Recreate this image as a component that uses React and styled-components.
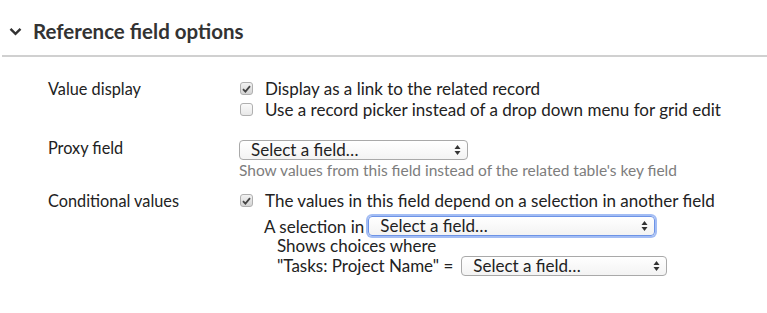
import React from "react";
import styled, { createGlobalStyle } from "styled-components";

const Global = createGlobalStyle`
  body {
    margin: 0;
    background: #fff;
    font-family: Lato, "Open Sans", sans-serif;
    color: #222;
  }
`;

const Section = styled.div`
  width: 767px;
  height: 313px;
  padding-top: 17px;
  box-sizing: border-box;
`;

const Header = styled.div`
  display: flex;
  align-items: center;
  gap: 11px;
  padding-left: 7px;
  height: 28px;
  border-bottom: 2px solid #d0d0d0;
  margin-left: 2px;
  padding-bottom: 10px;
  h2 {
    margin: 0;
    font-size: 20.5px;
    font-weight: 700;
    color: #333;
  }
`;

const Body = styled.div`
  padding: 21px 0 0 48px;
  display: flex;
  flex-direction: column;
`;

const Row = styled.div`
  display: grid;
  grid-template-columns: 191px 1fr;
  font-size: 17px;
  line-height: 21px;
  margin-top: ${(p) => p.gap || 0}px;
`;

const Label = styled.div`
  color: #222;
  font-size: 16.3px;
`;

const Options = styled.div`
  display: flex;
  flex-direction: column;
`;

const Check = styled.label`
  display: flex;
  align-items: center;
  gap: 12px;
  color: #222;
`;

const Box = styled.span`
  width: 11px;
  height: 11px;
  border: 1px solid #b0b0b0;
  border-radius: 3px;
  background: ${(p) =>
    p.checked ? "linear-gradient(#f2f2f2, #d4d4d4)" : "linear-gradient(#fafafa, #e8e8e8)"};
  display: flex;
  align-items: center;
  justify-content: center;
  flex-shrink: 0;
  margin-left: 1px;
`;

const Select = styled.div`
  display: flex;
  align-items: center;
  justify-content: space-between;
  box-sizing: border-box;
  width: ${(p) => p.w}px;
  height: 20px;
  margin-top: ${(p) => p.top || 0}px;
  padding: 0 6px 0 11px;
  border: 1px solid #a9a9a9;
  border-radius: 4px;
  background: linear-gradient(#fff, #f3f3f3);
  font-size: 17px;
  line-height: 18px;
  color: #222;
  flex-shrink: 0;
  ${(p) =>
    p.focus &&
    `
    border-color: #6d93e6;
    box-shadow: 0 0 0 2px #a3bdf4;
  `}
`;

const Hint = styled.div`
  color: #7d7d7d;
  font-size: 15.5px;
  line-height: 20px;
`;

const Inline = styled.div`
  display: flex;
  align-items: center;
  height: 20px;
  gap: ${(p) => p.gap}px;
  padding-left: ${(p) => p.indent}px;
  margin-top: ${(p) => p.top || 0}px;
  white-space: nowrap;
`;

const Stack = styled.div`
  display: flex;
  flex-direction: column;
  padding-left: 38px;
  line-height: 20px;
`;

const Arrows = () => (
  <svg width="7" height="12" viewBox="0 0 7 12">
    <path d="M3.5 1 L6.5 5 L0.5 5 Z" fill="#333" />
    <path d="M3.5 11 L6.5 7 L0.5 7 Z" fill="#333" />
  </svg>
);

const Tick = () => (
  <svg width="9" height="8" viewBox="0 0 9 8">
    <path d="M1 4.2 L3.4 6.6 L8 1.2" fill="none" stroke="#444" strokeWidth="1.8" />
  </svg>
);

const Chevron = () => (
  <svg width="13" height="9" viewBox="0 0 13 9">
    <path d="M1.5 1.8 L6.5 6.8 L11.5 1.8" fill="none" stroke="#333" strokeWidth="2.4" />
  </svg>
);

const Field = ({ w, focus, top }) => (
  <Select w={w} focus={focus} top={top}>
    <span>Select a field…</span>
    <Arrows />
  </Select>
);

export default function App() {
  return (
    <Section>
      <Global />
      <Header>
        <Chevron />
        <h2>Reference field options</h2>
      </Header>
      <Body>
        <Row>
          <Label>Value display</Label>
          <Options>
            <Check>
              <Box checked>
                <Tick />
              </Box>
              Display as a link to the related record
            </Check>
            <Check>
              <Box />
              Use a record picker instead of a drop down menu for grid edit
            </Check>
          </Options>
        </Row>
        <Row gap={17}>
          <Label>Proxy field</Label>
          <Options>
            <Field w={229} top={3} />
            <Hint>Show values from this field instead of the related table's key field</Hint>
          </Options>
        </Row>
        <Row gap={10}>
          <Label>Conditional values</Label>
          <Options>
            <Check>
              <Box checked>
                <Tick />
              </Box>
              The values in this field depend on a selection in another field
            </Check>
            <Inline indent={25} gap={4} top={5}>
              A selection in
              <Field w={287} focus />
            </Inline>
            <Stack>
              <span>Shows choices where</span>
              <Inline indent={0} gap={8}>
                "Tasks: Project Name" =
                <Field w={206} />
              </Inline>
            </Stack>
          </Options>
        </Row>
      </Body>
    </Section>
  );
}
